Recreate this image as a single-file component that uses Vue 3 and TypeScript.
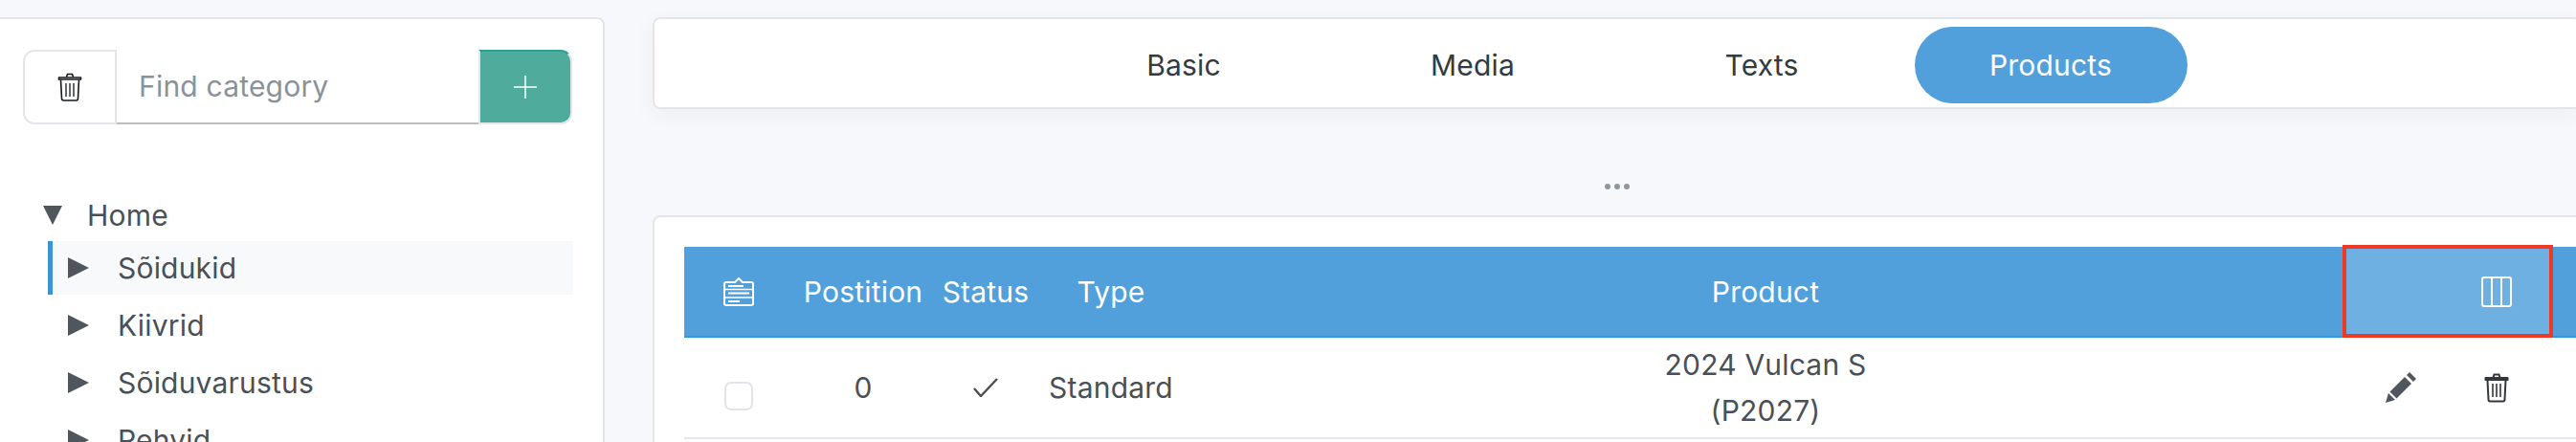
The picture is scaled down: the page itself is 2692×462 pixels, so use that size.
<script setup lang="ts">
const tabs: string[] = ['Basic', 'Media', 'Texts', 'Products']
const categories: string[] = ['Sõidukid', 'Kiivrid', 'Sõiduvarustus', 'Rehvid']
</script>

<template>
  <div class="page">
    <aside class="sidebar card">
      <div class="search">
        <button class="clear">
          <svg width="26" height="30" viewBox="0 0 26 30" fill="none" stroke="#16191d" stroke-width="1.600">
            <path d="M1.500 7V5h23v2z" stroke-linejoin="round" />
            <path d="M9.500 4.500 10.500 1.500h5l1 3" />
            <path d="M3.500 7.500 4.500 27a2 2 0 0 0 2 2h13a2 2 0 0 0 2-2l1-19.500" />
            <path d="M9 11v14M13 11v14M17 11v14" stroke-width="1.300" />
          </svg>
        </button>
        <div class="find">Find category</div>
        <button class="add">
          <svg width="26" height="26" viewBox="0 0 26 26" stroke="#fff" stroke-width="1.500"><path d="M13 1v24M1 13h24" /></svg>
        </button>
      </div>
      <div class="tree">
        <div class="root">
          <svg class="down" width="20" height="20" viewBox="0 0 20 20"><path d="M0 0h20L10 20z" fill="#50565e" /></svg>
          <span>Home</span>
        </div>
        <div v-for="(c, i) in categories" :key="c" class="node" :class="{ active: i === 0 }">
          <svg width="22" height="22" viewBox="0 0 22 22"><path d="M0 0l22 11L0 22z" fill="#50565e" /></svg>
          <span>{{ c }}</span>
        </div>
      </div>
    </aside>

    <main class="content">
      <nav class="tabs card">
        <div v-for="t in tabs" :key="t" class="tab" :class="{ on: t === 'Products' }">{{ t }}</div>
      </nav>
      <div class="dots"><i></i><i></i><i></i></div>
      <section class="panel card">
        <div class="grid head">
          <div class="cell">
            <svg width="32" height="30" viewBox="0 0 32 30" fill="none" stroke="#fff" stroke-width="2">
              <path d="M3 5h9l4-4 4 4h9a2 2 0 0 1 2 2v20a2 2 0 0 1-2 2H3a2 2 0 0 1-2-2V7a2 2 0 0 1 2-2z" />
              <path d="M1 12.500h30M1 21h30" stroke-width="1.500" />
              <path d="M5 9h16M5 16.500h22M5 25h12" stroke-width="2" />
            </svg>
          </div>
          <div class="cell">Postition</div>
          <div class="cell">Status</div>
          <div class="cell">Type</div>
          <div class="cell product">Product</div>
          <div class="cell columns">
            <svg width="32" height="32" viewBox="0 0 32 32" fill="none" stroke="#fff" stroke-width="2">
              <rect x="1" y="1" width="30" height="30" rx="2" />
              <path d="M11 1v30M21 1v30" />
            </svg>
          </div>
        </div>
        <div class="grid row">
          <div class="cell"><span class="check"></span></div>
          <div class="cell">0</div>
          <div class="cell">
            <svg width="26" height="20" viewBox="0 0 26 20" fill="none" stroke="#495057" stroke-width="2.400"><path d="M1 11l7 8L25 1" /></svg>
          </div>
          <div class="cell">Standard</div>
          <div class="cell product">2024 Vulcan S<br />(P2027)</div>
          <div class="cell actions">
            <svg width="32" height="32" viewBox="0 0 32 32" fill="#50565e">
              <path d="M0 32 3 22l7 7z" />
              <path d="M4.500 20.500 20 5l7 7-15.500 15.500z" />
              <path d="M22 3l3-3 7 7-3 3z" />
            </svg>
            <svg width="26" height="31" viewBox="0 0 26 31" fill="none" stroke="#32373d" stroke-width="2">
              <path d="M1.500 7V5h23v2z" stroke-linejoin="round" />
              <path d="M9.500 4.500 10.500 1.500h5l1 3" />
              <path d="M3.500 7.500 4.500 27.500a2 2 0 0 0 2 2h13a2 2 0 0 0 2-2l1-20" />
              <path d="M9 11v14M13 11v14M17 11v14" stroke-width="1.600" />
            </svg>
          </div>
        </div>
      </section>
    </main>
  </div>
</template>

<style>
html, body { margin: 0; background: #f6f8fb; overflow: hidden; }
</style>

<style scoped>
.page {
  display: flex;
  gap: 50px;
  width: 2692px;
  height: 462px;
  overflow: hidden;
  padding-top: 18px;
  box-sizing: border-box;
  background: #f6f8fb;
  font-family: Inter, "Liberation Sans", sans-serif;
  font-size: 30px;
  letter-spacing: 0.2px;
  color: #495057;
}
.card {
  background: #fff;
  border: 2px solid #e3e5e8;
  border-radius: 8px;
  box-sizing: border-box;
}
.sidebar {
  flex: none;
  width: 642px;
  height: 500px;
  margin-left: -10px;
  padding: 32px 32px 0;
}
.search { display: flex; height: 78px; width: 574px; }
.clear, .add { flex: none; display: flex; align-items: center; justify-content: center; padding: 0; box-sizing: border-box; }
.clear {
  width: 98px;
  background: #fff;
  border: 2px solid #e3e6ea;
  border-radius: 12px 0 0 12px;
}
.find {
  flex: 1;
  display: flex;
  align-items: center;
  padding-left: 23px;
  border-bottom: 2px solid #bdbdbd;
  color: #8a9299;
}
.add {
  width: 98px;
  background: #4fac9d;
  border: 2px solid #e3e6ea;
  border-top-color: #27a28f;
  border-radius: 0 12px 12px 0;
}
.tree { margin-top: 75px; }
.root { display: flex; align-items: center; gap: 26px; height: 40px; padding-left: 21px; margin-bottom: 7px; }
.node {
  display: flex;
  align-items: center;
  gap: 30px;
  height: 56px;
  margin: 0 0 4px 26px;
  padding-left: 21px;
  width: 549px;
  box-sizing: border-box;
}
.active { background: #f8f9fb; box-shadow: inset 5px 0 0 #3d93d8; }
.content { flex: none; width: 2016px; }
.tabs {
  display: flex;
  justify-content: center;
  gap: 17px;
  align-items: center;
  height: 96px;
  padding-top: 4px;
  color: #343a40;
  box-shadow: 0 6px 24px rgba(60, 70, 90, 0.05);
}
.tab {
  width: 285px;
  height: 80px;
  display: flex;
  align-items: center;
  justify-content: center;
  border-radius: 40px;
}
.on { background: #519fdb; color: #fff; }
.dots { height: 111px; display: flex; gap: 4px; justify-content: center; align-items: center; padding-top: 50px; box-sizing: border-box; }
.dots i { width: 6px; height: 6px; border-radius: 50%; background: #90969d; }
.panel { padding: 31px 0 0 31px; height: 300px; }
.grid { display: grid; grid-template-columns: 114px 146px 110px 152px 1213px 216px; }
.cell { display: flex; align-items: center; justify-content: center; text-align: center; }
.head { height: 95px; background: #519fdb; color: #fff; border-bottom: 2px solid #2f9ae4; box-sizing: border-box; }
.product { padding-left: 3px; }
.columns {
  background: #6eb0e2;
  outline: 4px solid #ee3a24;
  outline-offset: -2px;
  justify-content: flex-end;
  padding-right: 41px;
}
.row { height: 106px; border-bottom: 2px solid #e3e6ea; box-sizing: border-box; line-height: 48px; }
.check { width: 30px; height: 30px; border: 2px solid #e1e4e8; border-radius: 7px; box-sizing: border-box; margin-top: 18px; }
.actions { justify-content: flex-end; gap: 71px; padding-right: 44px; }
</style>
